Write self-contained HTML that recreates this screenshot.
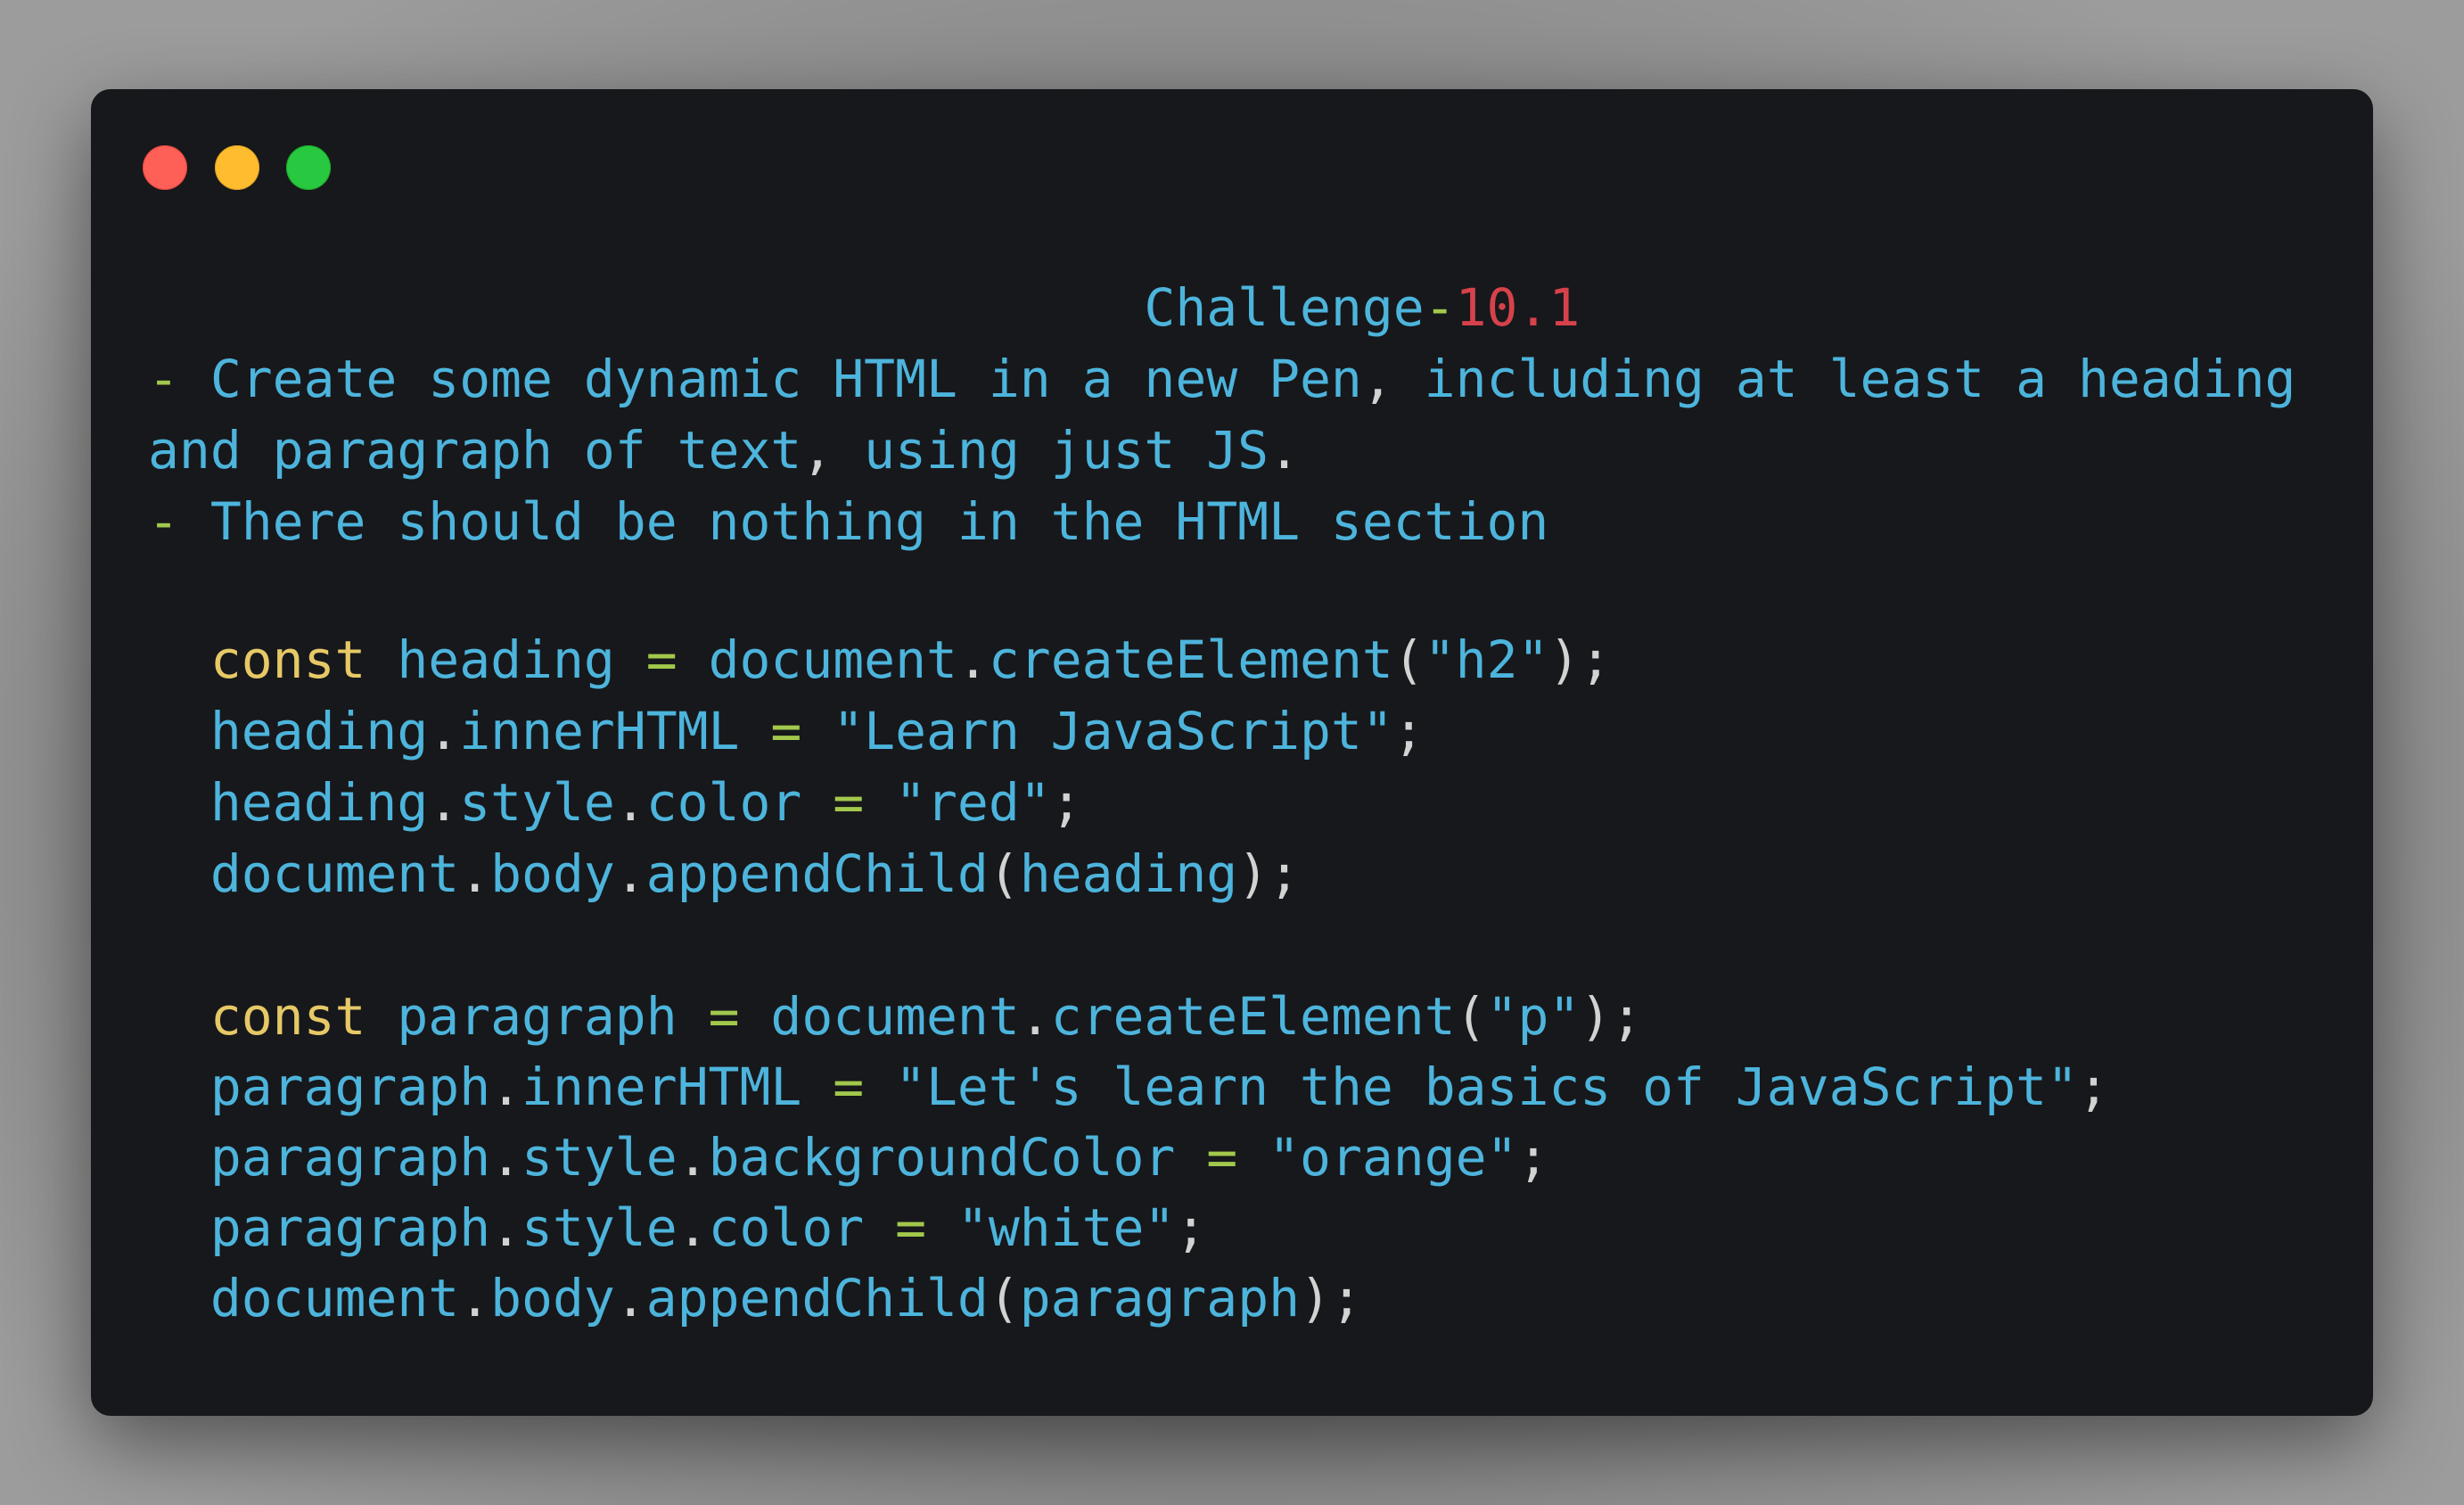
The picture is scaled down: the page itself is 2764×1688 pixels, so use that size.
<!DOCTYPE html>
<html><head><meta charset="utf-8"><style>
html,body{margin:0;padding:0;}
body{width:2764px;height:1688px;overflow:hidden;position:relative;
background:radial-gradient(ellipse 1700px 1100px at 1382px 900px,#5a5a5a 0%,#6e6e6e 45%,#8c8c8c 75%,#9c9c9c 100%);}
.win{position:absolute;left:102px;top:100px;width:2560px;height:1488px;background:#17181b;border-radius:22px;
box-shadow:0 30px 90px rgba(0,0,0,0.45);}
.dot{position:absolute;top:163px;width:50px;height:50px;border-radius:50%;}
.l{position:absolute;left:166px;white-space:pre;font-family:"DejaVu Sans Mono","Liberation Mono",monospace;font-size:58px;line-height:80px;color:#4db4dc;}
.g{color:#a2c84c}.y{color:#e6c866}.w{color:#d2d2d2}.r{color:#d6424b}
</style></head><body>
<div class="win"></div>
<div class="dot" style="left:160px;background:#fe5f57;box-shadow:inset 0 0 0 1px #e0443e"></div>
<div class="dot" style="left:241px;background:#febc2e;box-shadow:inset 0 0 0 1px #dea123"></div>
<div class="dot" style="left:321px;background:#28c840;box-shadow:inset 0 0 0 1px #1aab29"></div>

<div class="l" style="top:305px">                                Challenge<span class="g">-</span><span class="r">10.1</span></div>
<div class="l" style="top:385px"><span class="g">-</span> Create some dynamic HTML in a new Pen<span class="w">,</span> including at least a heading</div>
<div class="l" style="top:465px">and paragraph of text<span class="w">,</span> using just JS<span class="w">.</span></div>
<div class="l" style="top:545px"><span class="g">-</span> There should be nothing in the HTML section</div>

<div class="l" style="top:700px">  <span class="y">const</span> heading <span class="g">=</span> document<span class="w">.</span>createElement<span class="w">(</span>"h2"<span class="w">);</span></div>
<div class="l" style="top:780px">  heading<span class="w">.</span>innerHTML <span class="g">=</span> "Learn JavaScript"<span class="w">;</span></div>
<div class="l" style="top:860px">  heading<span class="w">.</span>style<span class="w">.</span>color <span class="g">=</span> "red"<span class="w">;</span></div>
<div class="l" style="top:940px">  document<span class="w">.</span>body<span class="w">.</span>appendChild<span class="w">(</span>heading<span class="w">);</span></div>

<div class="l" style="top:1100px">  <span class="y">const</span> paragraph <span class="g">=</span> document<span class="w">.</span>createElement<span class="w">(</span>"p"<span class="w">);</span></div>
<div class="l" style="top:1179px">  paragraph<span class="w">.</span>innerHTML <span class="g">=</span> "Let's learn the basics of JavaScript"<span class="w">;</span></div>
<div class="l" style="top:1258px">  paragraph<span class="w">.</span>style<span class="w">.</span>backgroundColor <span class="g">=</span> "orange"<span class="w">;</span></div>
<div class="l" style="top:1337px">  paragraph<span class="w">.</span>style<span class="w">.</span>color <span class="g">=</span> "white"<span class="w">;</span></div>
<div class="l" style="top:1416px">  document<span class="w">.</span>body<span class="w">.</span>appendChild<span class="w">(</span>paragraph<span class="w">);</span></div>
</body></html>
